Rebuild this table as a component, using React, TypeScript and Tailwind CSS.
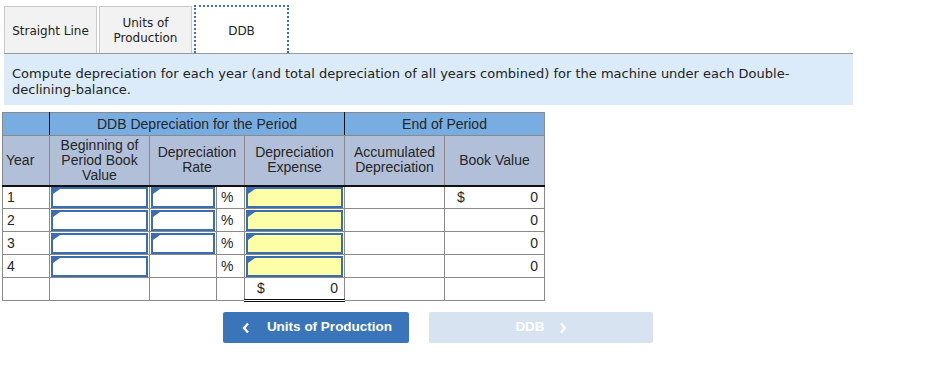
import React from "react";

const tabs = [
	{ key: "sl", label: "Straight Line" },
	{ key: "uop", label: "Units of\nProduction" },
	{ key: "ddb", label: "DDB" },
];

// input cell with the little blue flag in its top-left corner
const FlagInput = ({ yellow = false }: { yellow?: boolean }) => (
	<div
		className={`relative h-[21px] mx-[1px] border-2 border-[#3c6db0] ${
			yellow ? "bg-[#ffffa8]" : "bg-white"
		}`}
	>
		<span className="absolute left-0 top-0 w-0 h-0 border-t-[5px] border-t-[#3c6db0] border-r-[7px] border-r-transparent border-b-[4px] border-b-transparent" />
	</div>
);

const rows = [
	{ year: "1", rate: true, book: "0", dollar: true },
	{ year: "2", rate: true, book: "0", dollar: false },
	{ year: "3", rate: true, book: "0", dollar: false },
	{ year: "4", rate: false, book: "0", dollar: false },
];

const td = "border border-[#8a8a8a] p-0 h-[23px] align-middle";
const th2 = "border border-[#8a8a8a] font-normal text-[14px] leading-[15px] text-[#262626] align-middle";

export default function App() {
	return (
		<div
			className="w-[942px] h-[365px] bg-white pt-[5px] pl-[4px]"
			style={{ fontFamily: "'Liberation Sans', Arial, sans-serif" }}
		>
			{/* tab strip */}
			<div
				className="flex items-end gap-[1px] text-[12px] text-[#222]"
				style={{ fontFamily: "'DejaVu Sans', Verdana, sans-serif" }}
			>
				{tabs.map((t) =>
					t.key === "ddb" ? (
						<div
							key={t.key}
							className="w-[95px] h-[48px] pt-[2px] border-2 border-dotted border-b-0 border-[#3b6fc0] bg-white flex items-center justify-center"
						>
							{t.label}
						</div>
					) : (
						<div
							key={t.key}
							className="w-[93px] h-[47px] pt-[2px] mr-[1px] border border-b-0 border-[#c9c9c9] bg-[#f2f2f2] flex items-center justify-center text-center leading-[15px] whitespace-pre-line"
						>
							{t.label}
						</div>
					)
				)}
			</div>

			{/* instructions */}
			<div
				className="w-[849px] h-[52px] border-t border-[#9a9a9a] bg-[#dbebf9] px-[8px] pt-[12px] text-[13px] leading-[16px] text-[#222]"
				style={{ fontFamily: "'DejaVu Sans', Verdana, sans-serif" }}
			>
				Compute depreciation for each year (and total depreciation of all years combined) for the machine under each Double-declining-balance.
			</div>

			{/* depreciation schedule */}
			<table className="mt-[7px] ml-[-2px] border-collapse table-fixed w-[543px] text-[14px] text-[#262626]">
				<colgroup>
					<col className="w-[47px]" />
					<col className="w-[100px]" />
					<col className="w-[67px]" />
					<col className="w-[28px]" />
					<col className="w-[100px]" />
					<col className="w-[100px]" />
					<col className="w-[100px]" />
				</colgroup>
				<thead>
					<tr className="h-[23px] bg-[#78ade2]">
						<th className="border border-[#8a8a8a] border-r-[#111]" />
						<th
							colSpan={4}
							className="border border-[#8a8a8a] border-x-[#111] font-normal text-[14px] text-[#262626]"
						>
							DDB Depreciation for the Period
						</th>
						<th
							colSpan={2}
							className="border border-[#8a8a8a] border-l-[#111] font-normal text-[14px] text-[#262626]"
						>
							End of Period
						</th>
					</tr>
					<tr className="h-[50px] bg-[#b1bfd9] border-b-2 border-b-[#111]">
						<th className={`${th2} text-left pl-[3px]`}>Year</th>
						<th className={`${th2} border-l-[#111]`}>
							Beginning of
							<br />
							Period Book
							<br />
							Value
						</th>
						<th colSpan={2} className={th2}>
							Depreciation
							<br />
							Rate
						</th>
						<th className={th2}>
							Depreciation
							<br />
							Expense
						</th>
						<th className={`${th2} border-l-[#111]`}>
							Accumulated
							<br />
							Depreciation
						</th>
						<th className={th2}>Book Value</th>
					</tr>
				</thead>
				<tbody>
					{rows.map((r) => (
						<tr key={r.year}>
							<td className={`${td} pl-[4px]`}>{r.year}</td>
							<td className={td}>
								<FlagInput />
							</td>
							<td className={td}>{r.rate && <FlagInput />}</td>
							<td className={`${td} pl-[4px]`}>%</td>
							<td className={td}>
								<FlagInput yellow />
							</td>
							<td className={td} />
							<td className={`${td} px-[6px]`}>
								<div className="flex justify-between">
									<span className="pl-[6px]">{r.dollar ? "$" : ""}</span>
									<span>{r.book}</span>
								</div>
							</td>
						</tr>
					))}
					<tr>
						<td className={td} />
						<td className={td} />
						<td className={td} />
						<td className={td} />
						<td className={`${td} px-[6px] border-b-[3px] border-b-[#111] border-double`}>
							<div className="flex justify-between">
								<span className="pl-[6px]">$</span>
								<span>0</span>
							</div>
						</td>
						<td className={td} />
						<td className={td} />
					</tr>
				</tbody>
			</table>

			{/* navigation */}
			<div className="flex gap-[20px] ml-[219px] mt-[10px]">
				<button className="w-[186px] h-[31px] rounded-[2px] bg-[#3a75ba] text-white font-bold text-[13.5px] flex items-center justify-center gap-[17px] pl-[2px]">
					<svg width="8" height="12" viewBox="0 0 8 12" fill="none">
						<path d="M6 1.5 L2 6 L6 10.5" stroke="white" strokeWidth="2.2" />
					</svg>
					Units of Production
				</button>
				<button className="w-[224px] h-[31px] rounded-[2px] bg-[#d7e3f1] text-white font-bold text-[13.5px] flex items-center justify-center gap-[14px]">
					DDB
					<svg width="8" height="12" viewBox="0 0 8 12" fill="none">
						<path d="M2 1.5 L6 6 L2 10.5" stroke="white" strokeWidth="2.2" />
					</svg>
				</button>
			</div>
		</div>
	);
}
